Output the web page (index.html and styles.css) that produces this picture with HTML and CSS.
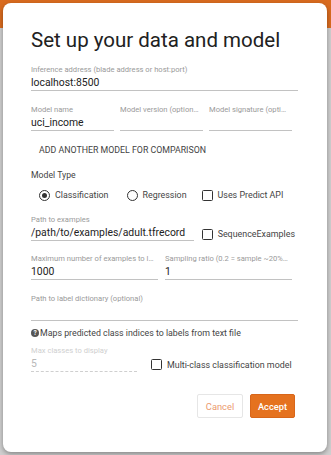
FILE: index.html
```html
<!DOCTYPE html>
<html>
<head>
<meta charset="utf-8">
<link rel="stylesheet" href="styles.css">
</head>
<body>
<div class="page">
  <div class="page-header"></div>
  <div class="page-body"></div>
</div>
<div class="dialog">
  <h1 class="title">Set up your data and model</h1>

  <div class="field w-full">
    <div class="label">Inference address (blade address or host:port)</div>
    <div class="value">localhost:8500</div>
  </div>

  <div class="row row-models">
    <div class="field w-third">
      <div class="label">Model name</div>
      <div class="value">uci_income</div>
    </div>
    <div class="field w-third">
      <div class="label">Model version (optional)</div>
      <div class="value"></div>
    </div>
    <div class="field w-third">
      <div class="label">Model signature (optional)</div>
      <div class="value"></div>
    </div>
  </div>

  <div class="text-button">ADD ANOTHER MODEL FOR COMPARISON</div>

  <div class="section-title">Model Type</div>

  <div class="options">
    <div class="option">
      <span class="radio checked"></span>
      <span class="option-text">Classification</span>
    </div>
    <div class="option opt-regression">
      <span class="radio"></span>
      <span class="option-text">Regression</span>
    </div>
    <div class="option opt-predict">
      <span class="checkbox"></span>
      <span class="option-text">Uses Predict API</span>
    </div>
  </div>

  <div class="row row-path">
    <div class="field w-path">
      <div class="label">Path to examples</div>
      <div class="value">/path/to/examples/adult.tfrecord</div>
    </div>
    <div class="option opt-seq">
      <span class="checkbox"></span>
      <span class="option-text">SequenceExamples</span>
    </div>
  </div>

  <div class="row row-max">
    <div class="field w-half">
      <div class="label">Maximum number of examples to load</div>
      <div class="value">1000</div>
    </div>
    <div class="field w-half">
      <div class="label">Sampling ratio (0.2 = sample ~20% of examples)</div>
      <div class="value">1</div>
    </div>
  </div>

  <div class="field w-full field-dict">
    <div class="label">Path to label dictionary (optional)</div>
    <div class="value empty"></div>
  </div>

  <div class="help"><span class="help-icon">?</span>Maps predicted class indices to labels from text file</div>

  <div class="row row-classes">
    <div class="field w-classes disabled">
      <div class="label">Max classes to display</div>
      <div class="value">5</div>
    </div>
    <div class="option opt-multi">
      <span class="checkbox"></span>
      <span class="option-text">Multi-class classification model</span>
    </div>
  </div>

  <div class="actions">
    <button class="btn btn-cancel">Cancel</button>
    <button class="btn btn-accept">Accept</button>
  </div>
</div>
</body>
</html>
```

FILE: styles.css
```css
* { box-sizing: border-box; }

html, body {
  margin: 0;
  padding: 0;
  width: 331px;
  height: 455px;
  overflow: hidden;
  font-family: Roboto, "Liberation Sans", sans-serif;
}

.page {
  width: 331px;
  height: 455px;
  display: flex;
  flex-direction: column;
  background: #cdcdcd;
}

.page-header {
  height: 28px;
  background: #d96b1f;
}

.page-body {
  flex: 1;
  background: #cfcfcf;
}

.dialog {
  position: absolute;
  left: 3px;
  top: 3px;
  width: 324px;
  height: 449px;
  background: #fff;
  border-radius: 8px;
  box-shadow: 0 2px 5px rgba(0, 0, 0, 0.35);
  padding: 25px 32px 0 28px;
}

.title {
  margin: 0;
  font-size: 20.5px;
  line-height: 24px;
  font-weight: 400;
  color: #212121;
  white-space: nowrap;
}

.field {
  display: flex;
  flex-direction: column;
}

.label {
  font-size: 7.6px;
  line-height: 12px;
  color: #9a9a9a;
  white-space: nowrap;
  overflow: hidden;
  text-overflow: ellipsis;
}

.value {
  font-size: 10.4px;
  line-height: 14px;
  height: 15px;
  color: #222;
  border-bottom: 1px solid #c2c2c2;
  white-space: nowrap;
}

.w-full {
  width: 267px;
  margin-top: 12px;
}

.row {
  display: flex;
  align-items: flex-end;
}

.row-models {
  margin-top: 13px;
  gap: 6px;
}

.w-third { width: 83px; }

.w-third .label { padding-right: 3px; }

.text-button {
  margin-top: 7px;
  height: 24px;
  padding-left: 8px;
  font-size: 8.8px;
  line-height: 24px;
  color: #444;
}

.section-title {
  margin-top: 7px;
  font-size: 8.7px;
  line-height: 12px;
  color: #444;
}

.options {
  margin-top: 6px;
  height: 16px;
  display: flex;
  align-items: center;
  padding-left: 8px;
}

.option {
  display: flex;
  align-items: center;
  gap: 5px;
}

.option-text {
  font-size: 8.9px;
  line-height: 12px;
  color: #444;
  white-space: nowrap;
}

.opt-regression { margin-left: 18px; }
.opt-predict { margin-left: 15px; }

.radio {
  width: 11px;
  height: 11px;
  border: 1.4px solid #333;
  border-radius: 50%;
  display: flex;
  align-items: center;
  justify-content: center;
}

.radio.checked::after {
  content: "";
  width: 5px;
  height: 5px;
  border-radius: 50%;
  background: #333;
}

.checkbox {
  width: 11px;
  height: 11px;
  border: 1.4px solid #333;
  border-radius: 1.5px;
}

.row-path {
  margin-top: 11px;
  gap: 8px;
}

.w-path { width: 166px; }

.opt-seq { margin-bottom: 1px; }

.row-max {
  margin-top: 12px;
  gap: 7px;
}

.w-half { width: 127px; }

.w-half .label { padding-right: 3px; }

.field-dict { margin-top: 13px; }

.value.empty { height: 16px; }

.help {
  margin-top: 6px;
  display: flex;
  align-items: center;
  gap: 1px;
  font-size: 8.8px;
  line-height: 12px;
  color: #444;
  white-space: nowrap;
}

.help-icon {
  width: 8px;
  height: 8px;
  border-radius: 50%;
  background: #555;
  color: #fff;
  font-size: 6.5px;
  font-weight: 700;
  line-height: 8px;
  text-align: center;
}

.row-classes {
  margin-top: 6px;
  gap: 14px;
  align-items: center;
}

.w-classes { width: 106px; }

.disabled .label { color: #cfcfcf; }

.disabled .value {
  color: #b8b8b8;
  border-bottom: 1px dashed #cfcfcf;
}

.opt-multi { margin-top: 12px; }

.actions {
  margin-top: 22px;
  display: flex;
  justify-content: flex-end;
  gap: 7px;
}

.btn {
  height: 24px;
  padding: 0;
  font-family: Roboto, "Liberation Sans", sans-serif;
  font-size: 9.3px;
  border-radius: 2px;
  cursor: pointer;
}

.btn-cancel {
  width: 46px;
  background: #fff;
  border: 1px solid #e6e6e6;
  color: #ec9a6e;
}

.btn-accept {
  width: 45px;
  background: #e5721f;
  border: 1px solid #d8661a;
  color: #fff;
  font-weight: 500;
}
```
